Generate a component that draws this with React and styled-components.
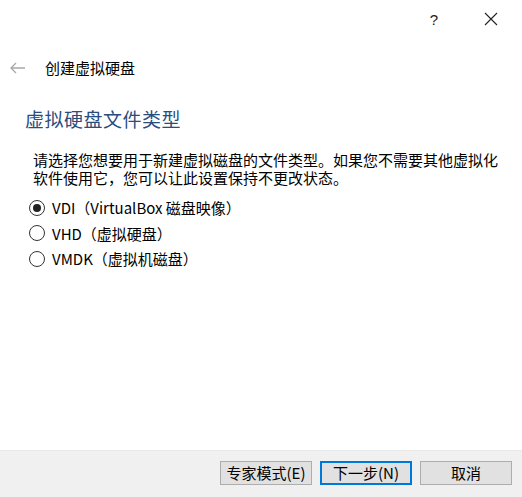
import React, { useState } from "react";
import styled, { createGlobalStyle } from "styled-components";

const Global = createGlobalStyle`
  html, body { margin: 0; padding: 0; background: #fff; }
  body { font-family: "Noto Sans CJK SC", "Noto Sans", sans-serif; color: #000; }
  * { box-sizing: border-box; }
`;

const Window = styled.div`
  width: 522px;
  height: 497px;
  display: flex;
  flex-direction: column;
  background: #fff;
`;

const TitleBar = styled.div`
  height: 38px;
  display: flex;
  align-items: center;
  justify-content: flex-end;
  padding-right: 8px;
`;

const TitleButton = styled.div`
  width: ${(p) => p.$w}px;
  height: 38px;
  display: flex;
  align-items: center;
  justify-content: center;
  font-family: "Liberation Sans", sans-serif;
  font-size: 15px;
  color: #222;
`;

const HeaderRow = styled.div`
  margin-top: 18px;
  height: 24px;
  display: flex;
  align-items: center;
  padding-left: 9px;
  gap: 19px;
`;

const HeaderTitle = styled.span`
  font-size: 15px;
  line-height: 24px;
  color: #000;
`;

const Content = styled.div`
  padding-left: 25px;
  display: flex;
  flex-direction: column;
`;

const Heading = styled.h1`
  margin: 26px 0 0 0;
  font-size: 19px;
  line-height: 26px;
  font-weight: 400;
  color: #2a4d7e;
  letter-spacing: 0.5px;
`;

const Paragraph = styled.p`
  margin: 19px 0 0 8px;
  width: 470px;
  font-size: 15px;
  line-height: 18px;
`;

const Options = styled.div`
  margin-top: 8px;
  padding-left: 4px;
  display: flex;
  flex-direction: column;
`;

const OptionRow = styled.label`
  height: 25.5px;
  display: flex;
  align-items: center;
  gap: 7px;
  font-size: 15px;
  cursor: default;
`;

const RadioCircle = styled.span`
  width: 16px;
  height: 16px;
  border-radius: 50%;
  border: 1px solid #333;
  background: #fff;
  display: flex;
  align-items: center;
  justify-content: center;
  &::after {
    content: "";
    width: 8px;
    height: 8px;
    border-radius: 50%;
    background: #222;
    display: ${(p) => (p.$checked ? "block" : "none")};
  }
`;

const Footer = styled.div`
  margin-top: auto;
  height: 47px;
  background: #f0f0f0;
  border-top: 1px solid #e8e8e8;
  display: flex;
  justify-content: flex-end;
  align-items: flex-start;
  padding: 10px 10px 0 0;
  gap: 8px;
`;

const Button = styled.button`
  width: 92px;
  height: 24px;
  padding: 0;
  font-family: "Noto Sans CJK SC", "Noto Sans", sans-serif;
  font-size: 15px;
  line-height: 20px;
  color: #000;
  background: #e1e1e1;
  border: ${(p) => (p.$primary ? "2px solid #0078d7" : "1px solid #adadad")};
`;

const options = [
  "VDI（VirtualBox 磁盘映像）",
  "VHD（虚拟硬盘）",
  "VMDK（虚拟机磁盘）",
];

export default function App() {
  const [sel, setSel] = useState(0);
  return (
    <>
      <Global />
      <Window>
        <TitleBar>
          <TitleButton $w={68}>?</TitleButton>
          <TitleButton $w={46}>
            <svg width="14" height="14" viewBox="0 0 14 14">
              <path d="M1 1 L13 13 M13 1 L1 13" stroke="#222" strokeWidth="1.1" fill="none" />
            </svg>
          </TitleButton>
        </TitleBar>
        <HeaderRow>
          <svg width="17" height="12" viewBox="0 0 17 12">
            <path d="M16 6 H2 M7 1 L2 6 L7 11" stroke="#a8a8a8" strokeWidth="1.3" fill="none" />
          </svg>
          <HeaderTitle>创建虚拟硬盘</HeaderTitle>
        </HeaderRow>
        <Content>
          <Heading>虚拟硬盘文件类型</Heading>
          <Paragraph>
            请选择您想要用于新建虚拟磁盘的文件类型。如果您不需要其他虚拟化软件使用它，您可以让此设置保持不更改状态。
          </Paragraph>
          <Options>
            {options.map((o, i) => (
              <OptionRow key={o} onClick={() => setSel(i)}>
                <RadioCircle $checked={sel === i} />
                <span>{o}</span>
              </OptionRow>
            ))}
          </Options>
        </Content>
        <Footer>
          <Button>专家模式(E)</Button>
          <Button $primary>下一步(N)</Button>
          <Button>取消</Button>
        </Footer>
      </Window>
    </>
  );
}
